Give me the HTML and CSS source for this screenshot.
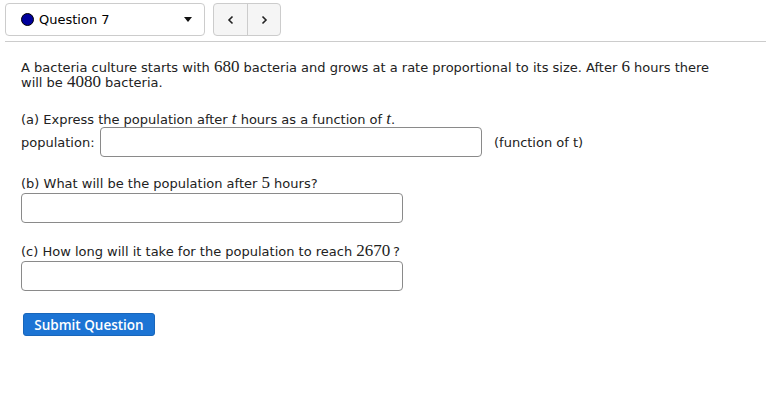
FILE: index.html
```html
<!DOCTYPE html>
<html>
<head>
<meta charset="utf-8">
<link rel="stylesheet" href="styles.css">
</head>
<body>
<div class="topbar">
  <div class="qselect">
    <span class="dot"></span>
    <span class="qlabel">Question 7</span>
    <span class="caret"></span>
  </div>
  <div class="navgroup">
    <button class="navbtn" aria-label="Previous">
      <svg width="8" height="10" viewBox="0 0 8 10"><path d="M5.5 1.5 L2 5 L5.5 8.5" fill="none" stroke="#222" stroke-width="1.6"/></svg>
    </button>
    <button class="navbtn" aria-label="Next">
      <svg width="8" height="10" viewBox="0 0 8 10"><path d="M2.5 1.5 L6 5 L2.5 8.5" fill="none" stroke="#222" stroke-width="1.6"/></svg>
    </button>
  </div>
</div>
<div class="rule"></div>
<div class="content">
  <p class="intro">A bacteria culture starts with <span class="m">680</span> bacteria and grows at a rate proportional to its size. After <span class="m">6</span> hours there will be <span class="m">4080</span> bacteria.</p>
  <p class="qline qa">(a) Express the population after <span class="mi">t</span> hours as a function of <span class="mi">t</span>.</p>
  <div class="row">
    <label class="lbl">population:</label>
    <span class="input wide"></span>
    <span class="hint">(function of t)</span>
  </div>
  <p class="qline qb">(b) What will be the population after <span class="m">5</span> hours?</p>
  <span class="input"></span>
  <p class="qline qc">(c) How long will it take for the population to reach <span class="m">2670</span>&thinsp;?</p>
  <span class="input"></span>
  <div class="actions">
    <button class="submit">Submit Question</button>
  </div>
</div>
</body>
</html>
```
FILE: styles.css
```css
html, body {
  margin: 0;
  padding: 0;
  background: #fff;
}
body {
  font-family: "DejaVu Sans", "Open Sans", sans-serif;
  font-size: 13px;
  color: #222;
}
.topbar {
  display: flex;
  align-items: flex-start;
  padding: 3px 0 0 5px;
  height: 34px;
}
.qselect {
  box-sizing: border-box;
  width: 200px;
  height: 33px;
  border: 1px solid #ccc;
  border-radius: 4px;
  display: flex;
  align-items: center;
  padding-left: 15px;
}
.dot {
  box-sizing: border-box;
  width: 13px;
  height: 13px;
  border-radius: 50%;
  background: #00009c;
  border: 1px solid #000;
  margin-right: 5px;
}
.qlabel {
  flex: 1;
  font-size: 13px;
  color: #000;
}
.caret {
  width: 0;
  height: 0;
  border-left: 4px solid transparent;
  border-right: 4px solid transparent;
  border-top: 5px solid #111;
  margin-right: 12px;
}
.navgroup {
  display: flex;
  margin-left: 8px;
  height: 33px;
  box-sizing: border-box;
  border: 1px solid #ccc;
  border-radius: 4px;
  background: #f5f5f5;
  overflow: hidden;
}
.navbtn {
  width: 33px;
  height: 31px;
  border: 0;
  background: transparent;
  padding: 0;
  display: flex;
  align-items: center;
  justify-content: center;
}
.navbtn + .navbtn {
  border-left: 1px solid #ccc;
}
.rule {
  margin: 4px 0 0 5px;
  border-top: 1px solid #ccc;
}
.content {
  padding: 0 0 0 21px;
}
p {
  margin: 0;
}
.intro {
  margin-top: 18px;
  width: 700px;
  line-height: 15px;
}
.m {
  font-family: "Liberation Serif", "DejaVu Serif", serif;
  font-size: 17px;
  line-height: 0;
}
.mi {
  font-family: "Liberation Serif", serif;
  font-style: italic;
  font-size: 17px;
  line-height: 0;
}
.qline {
  line-height: 15px;
}
.qa {
  margin-top: 22px;
}
.row {
  display: flex;
  align-items: center;
}
.lbl {
  width: 79px;
}
.input {
  display: block;
  box-sizing: border-box;
  width: 382px;
  height: 30px;
  border: 1px solid #8a8a8a;
  border-radius: 4px;
  background: #fff;
}
.hint {
  margin-left: 12px;
}
.qb {
  margin-top: 19px;
  margin-bottom: 2px;
}
.qc {
  margin-top: 21px;
  margin-bottom: 2px;
}
.actions {
  margin-top: 22px;
  padding-left: 2px;
}
.submit {
  font-family: "Open Sans", "DejaVu Sans", sans-serif;
  font-size: 13.5px;
  font-weight: 600;
  color: #fff;
  background: #1c74d4;
  border: 1px solid #1966ba;
  border-radius: 3px;
  height: 23px;
  width: 132px;
  padding: 0;
}
```
